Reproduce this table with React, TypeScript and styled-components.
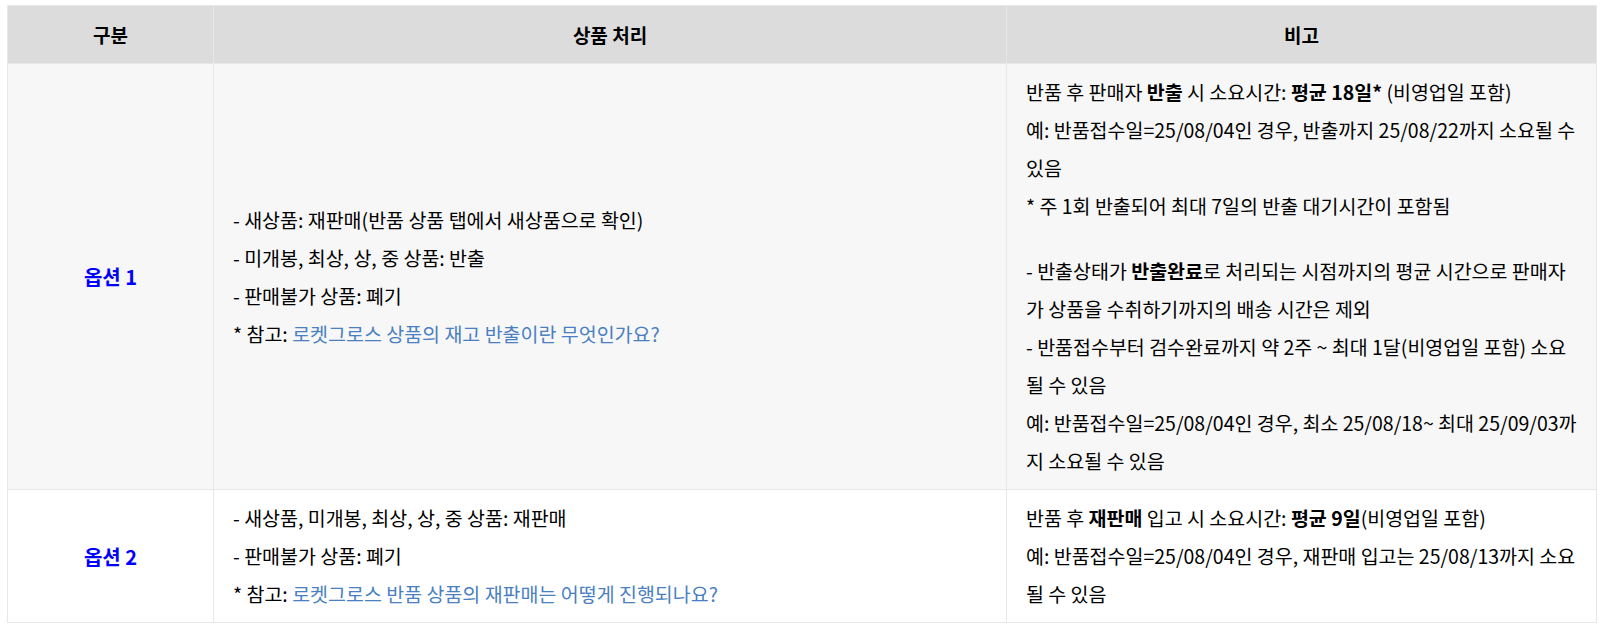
import React from 'react'
import styled, { createGlobalStyle } from 'styled-components'

const GlobalStyle = createGlobalStyle`
html, body {
    margin: 0;
    padding: 0;
    background: #fff;
}
body {
    font-family: "Noto Sans CJK KR", "Noto Sans", sans-serif;
    color: #000;
}
`

const Page = styled.div`
padding: 5px 6px 10px 7px;
`

const Table = styled.table`
width: 1590px;
border-collapse: collapse;
table-layout: fixed;
font-size: 19.5px;
`

const HeadCell = styled.th`
height: 57px;
padding: 0 20px;
background: #dcdcdc;
border: 1px solid #e8e8e8;
font-size: 19px;
font-weight: 700;
color: #000;
text-align: center;
vertical-align: middle;
`

const BodyRow = styled.tr<{ $shaded: boolean }>`
background: ${props => (props.$shaded ? '#f7f7f7' : '#fff')};
`

const Cell = styled.td`
padding: 9px 19px;
border: 1px solid #e8e8e8;
vertical-align: middle;
text-align: left;
`

const OptionCell = styled(Cell)`
text-align: center;
font-size: 20px;
font-weight: 700;
color: #0000ff;
`

const Line = styled.p<{ $gap?: boolean }>`
margin: ${props => (props.$gap ? '27px' : '0')} 0 0;
line-height: 38px;

& b {
    font-weight: 700;
}
`

const Anchor = styled.a`
color: #4a7fc1;
text-decoration: none;
`

type Row = {
    option: string
    handling: React.ReactNode[]
    notes: React.ReactNode
}

const rows: Row[] = [
    {
        option: '옵션 1',
        handling: [
            '- 새상품: 재판매(반품 상품 탭에서 새상품으로 확인)',
            '- 미개봉, 최상, 상, 중 상품: 반출',
            '- 판매불가 상품: 폐기',
            <>* 참고: <Anchor href="#">로켓그로스 상품의 재고 반출이란 무엇인가요?</Anchor></>,
        ],
        notes: (
            <>
                <Line>반품 후 판매자 <b>반출</b> 시 소요시간: <b>평균 18일*</b> (비영업일 포함)</Line>
                <Line>예: 반품접수일=25/08/04인 경우, 반출까지 25/08/22까지 소요될 수 있음</Line>
                <Line>* 주 1회 반출되어 최대 7일의 반출 대기시간이 포함됨</Line>
                <Line $gap>- 반출상태가 <b>반출완료</b>로 처리되는 시점까지의 평균 시간으로 판매자가 상품을 수취하기까지의 배송 시간은 제외</Line>
                <Line>- 반품접수부터 검수완료까지 약 2주 ~ 최대 1달(비영업일 포함) 소요될 수 있음</Line>
                <Line>예: 반품접수일=25/08/04인 경우, 최소 25/08/18~ 최대 25/09/03까지 소요될 수 있음</Line>
            </>
        ),
    },
    {
        option: '옵션 2',
        handling: [
            '- 새상품, 미개봉, 최상, 상, 중 상품: 재판매',
            '- 판매불가 상품: 폐기',
            <>* 참고: <Anchor href="#">로켓그로스 반품 상품의 재판매는 어떻게 진행되나요?</Anchor></>,
        ],
        notes: (
            <>
                <Line>반품 후 <b>재판매</b> 입고 시 소요시간: <b>평균 9일</b>(비영업일 포함)</Line>
                <Line>예: 반품접수일=25/08/04인 경우, 재판매 입고는 25/08/13까지 소요될 수 있음</Line>
            </>
        ),
    },
]

const App: React.FC = () => {
    return (
        <Page>
            <GlobalStyle />
            <Table>
                <colgroup>
                    <col style={{ width: 206 }} />
                    <col style={{ width: 793 }} />
                    <col />
                </colgroup>
                <thead>
                    <tr>
                        <HeadCell>구분</HeadCell>
                        <HeadCell>상품 처리</HeadCell>
                        <HeadCell>비고</HeadCell>
                    </tr>
                </thead>
                <tbody>
                    {rows.map((row, i) => (
                        <BodyRow key={row.option} $shaded={i === 0}>
                            <OptionCell>{row.option}</OptionCell>
                            <Cell>
                                {row.handling.map((item, j) => (
                                    <Line key={j}>{item}</Line>
                                ))}
                            </Cell>
                            <Cell>{row.notes}</Cell>
                        </BodyRow>
                    ))}
                </tbody>
            </Table>
        </Page>
    )
}

export default App
